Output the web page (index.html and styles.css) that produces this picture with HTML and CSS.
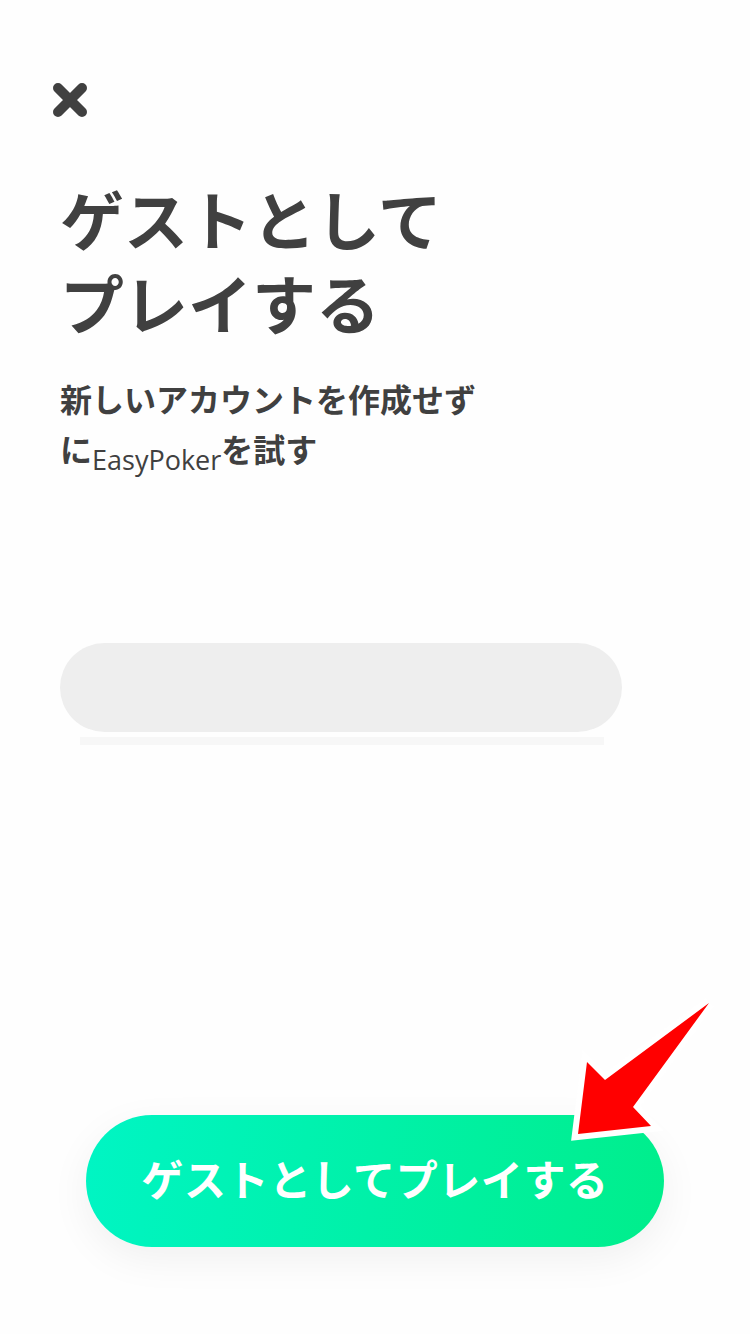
FILE: index.html
```html
<!DOCTYPE html>
<html lang="ja">
<head>
<meta charset="utf-8">
<title>ゲストとしてプレイする</title>
<link rel="stylesheet" href="styles.css">
</head>
<body>
<div class="screen">
  <div class="close" aria-label="閉じる">
    <svg viewBox="0 0 34 34" width="34" height="34">
      <path d="M5 5 L29 29 M29 5 L5 29" stroke="#404040" stroke-width="10" stroke-linecap="round" fill="none"/>
    </svg>
  </div>
  <h1 class="title">ゲストとして<br>プレイする</h1>
  <p class="subtitle">新しいアカウントを作成せず<br>に<span class="brand">EasyPoker</span>を試す</p>
  <div class="skeleton">
    <div class="skeleton-pill"></div>
    <div class="skeleton-bar"></div>
  </div>
  <button class="guest-btn">ゲストとしてプレイする</button>
  <svg class="pointer" viewBox="0 0 750 1334" width="750" height="1334">
    <polygon points="709,1003 633,1107 651,1126 578,1134 587,1062 605,1080" fill="#ff0000" stroke="#ffffff" stroke-width="12" stroke-linejoin="miter" paint-order="stroke"/>
  </svg>
</div>
</body>
</html>
```

FILE: styles.css
```css
html, body {
  margin: 0;
  padding: 0;
  background: #fefefe;
}
.screen {
  position: relative;
  width: 750px;
  height: 1334px;
  box-sizing: border-box;
  padding: 0 60px;
  display: flex;
  flex-direction: column;
  align-items: flex-start;
  font-family: "Noto Sans CJK JP", "Noto Sans", sans-serif;
  color: #404040;
  overflow: hidden;
}
.close {
  margin-top: 83px;
  margin-left: -7px;
  width: 34px;
  height: 34px;
}
.close svg {
  display: block;
}
.title {
  margin: 58px 0 0;
  font-size: 64px;
  line-height: 84px;
  font-weight: 700;
  letter-spacing: 0;
}
.subtitle {
  margin: 30px 0 0;
  font-size: 32px;
  line-height: 50px;
  font-weight: 700;
}
.brand {
  font-family: "Open Sans", "Noto Sans", sans-serif;
  font-weight: 400;
  font-size: 27px;
  vertical-align: -8px;
  line-height: 1;
}
.skeleton {
  margin-top: 170px;
  display: flex;
  flex-direction: column;
}
.skeleton-pill {
  width: 562px;
  height: 89px;
  border-radius: 45px;
  background: #eeeeee;
}
.skeleton-bar {
  margin: 5px 0 0 20px;
  width: 524px;
  height: 8px;
  background: #f7f7f7;
}
.guest-btn {
  margin-top: 370px;
  margin-left: 26px;
  width: 578px;
  height: 132px;
  border: none;
  border-radius: 66px;
  background: linear-gradient(100deg, #00f5c4 0%, #00f1a8 50%, #00ee8b 100%);
  box-shadow: 0 12px 40px rgba(0, 0, 0, 0.06);
  color: #ffffff;
  font-family: "Noto Sans CJK JP", "Noto Sans", sans-serif;
  font-size: 42px;
  font-weight: 700;
  letter-spacing: 0.6px;
  padding: 0 0 8px;
  cursor: pointer;
}
.pointer {
  position: absolute;
  left: 0;
  top: 0;
  pointer-events: none;
}
```
